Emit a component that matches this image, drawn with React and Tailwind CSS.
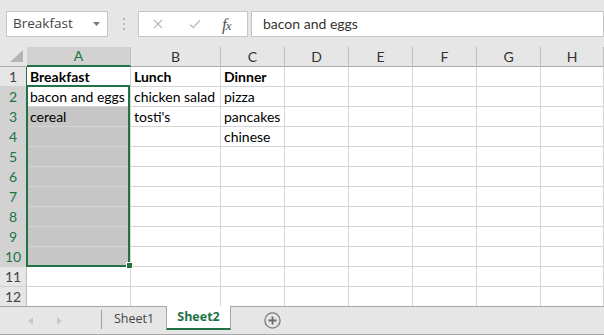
import React from "react";

const COLS = [
  ["A", "w-[104px]"],
  ["B", "w-[90px]"],
  ["C", "w-[64px]"],
  ["D", "w-[64px]"],
  ["E", "w-[64px]"],
  ["F", "w-[64px]"],
  ["G", "w-[64px]"],
  ["H", "w-[63px]"],
];

const DATA = {
  1: ["Breakfast", "Lunch", "Dinner"],
  2: ["bacon and eggs", "chicken salad", "pizza"],
  3: ["cereal", "tosti's", "pancakes"],
  4: ["", "", "chinese"],
};

const ROWS = [1, 2, 3, 4, 5, 6, 7, 8, 9, 10, 11, 12];

function RowHeader({ r }) {
  const sel = r >= 2 && r <= 10;
  let cls = "w-[27px] shrink-0 flex items-center justify-center border-r ";
  if (sel) cls += "bg-[#d2d2d2] text-[#217346] border-r-[#217346]";
  else if (r === 1) cls += "bg-[#e6e6e6] text-[#444444] border-r-[#217346]";
  else cls += "bg-[#e6e6e6] text-[#444444] border-r-[#bdbdbd]";
  if (r < 12) cls += " border-b border-b-[#d0d0d0]";
  return <div className={cls}>{r}</div>;
}

function Row({ r }) {
  const vals = DATA[r] || [];
  const rowCls =
    r < 12 ? "flex h-[20px] shrink-0" : "flex h-[19px] shrink-0";
  return (
    <div className={rowCls}>
      <RowHeader r={r} />
      {COLS.map(([l, w], c) => {
        const gray = c === 0 && r >= 3 && r <= 10;
        let cls =
          w +
          " shrink-0 flex items-center pl-[3px] whitespace-nowrap overflow-visible border-r border-[#d4d4d4] text-black ";
        cls += gray ? "bg-[#c6c6c6]" : "bg-white";
        if (r < 12) cls += " border-b";
        if (r === 1) cls += " font-bold";
        return (
          <div key={l} className={cls}>
            {vals[c] || ""}
          </div>
        );
      })}
    </div>
  );
}

export default function App() {
  return (
    <div className="w-[604px] h-[335px] bg-[#e6e6e6] flex flex-col overflow-hidden font-['Lato','Liberation_Sans',sans-serif] text-[14px] leading-none select-none">
      {/* Formula bar */}
      <div className="h-[47px] shrink-0 flex items-start pt-[11px]">
        <div className="ml-[6px] w-[102px] h-[26px] bg-white border border-[#c6c6c6] flex items-center justify-between pl-[6px] pr-[7px]">
          <span className="font-['Open_Sans','Noto_Sans',sans-serif] text-[13.5px] text-[#444444]">
            Breakfast
          </span>
          <svg width="7" height="4" viewBox="0 0 7 4">
            <polygon points="0,0 7,0 3.5,4" fill="#777777" />
          </svg>
        </div>
        <div className="ml-[15px] mt-[7px] flex flex-col gap-[3px]">
          <div className="w-[2px] h-[2px] bg-[#b5b5b5]" />
          <div className="w-[2px] h-[2px] bg-[#b5b5b5]" />
          <div className="w-[2px] h-[2px] bg-[#b5b5b5]" />
        </div>
        <div className="ml-[13px] w-[110px] h-[26px] bg-white border border-[#c6c6c6] flex items-center">
          <svg className="ml-[14px]" width="10" height="10" viewBox="0 0 10 10">
            <path d="M1 1 L9 9 M9 1 L1 9" stroke="#bdbdbd" strokeWidth="1.3" fill="none" />
          </svg>
          <svg className="ml-[26px]" width="12" height="10" viewBox="0 0 12 10">
            <path d="M1 5.5 L4.2 8.6 L11 1.2" stroke="#bdbdbd" strokeWidth="1.4" fill="none" />
          </svg>
          <span className="ml-[21px] font-['Liberation_Serif',serif] italic text-[#555555] text-[17px]">
            f<span className="text-[13px] ml-[-1px]">x</span>
          </span>
        </div>
        <div className="ml-[3px] w-[353px] h-[26px] bg-white border border-[#c6c6c6] flex items-center pl-[11px] text-[#333333]">
          bacon and eggs
        </div>
      </div>

      {/* Grid */}
      <div className="relative shrink-0">
        <div className="flex h-[20px]">
          <div className="w-[27px] shrink-0 border-b border-[#ababab] relative">
            <svg width="27" height="19" viewBox="0 0 27 19" className="block">
              <polygon points="10,15 23,15 23,3" fill="#b4b4b4" />
            </svg>
          </div>
          {COLS.map(([l, w], c) => (
            <div
              key={l}
              className={
                c === 0
                  ? w +
                    " shrink-0 flex items-center justify-center bg-[#d2d2d2] text-[#217346] border-r border-r-[#bdbdbd] border-b-2 border-b-[#217346]"
                  : w +
                    " shrink-0 flex items-center justify-center text-[#333333] border-r border-r-[#bdbdbd] border-b border-b-[#ababab]"
              }
            >
              {l}
            </div>
          ))}
        </div>
        {ROWS.map((r) => (
          <Row key={r} r={r} />
        ))}
        <div className="absolute left-[26px] top-[38px] w-[104px] h-[182px] border-2 border-[#217346] pointer-events-none" />
        <div className="absolute left-[126px] top-[215px] w-[7px] h-[7px] bg-[#217346] border border-white pointer-events-none" />
      </div>

      {/* Sheet tabs */}
      <div className="flex h-[29px] shrink-0 border-b border-[#a6a6a6] font-['Open_Sans','Noto_Sans',sans-serif] text-[12.5px]">
        <div className="w-[101px] border-t border-[#a6a6a6] flex items-center">
          <svg className="ml-[28px]" width="5" height="8" viewBox="0 0 5 8">
            <polygon points="5,0 5,8 0,4" fill="#c8c8c8" />
          </svg>
          <svg className="ml-[24px]" width="5" height="8" viewBox="0 0 5 8">
            <polygon points="0,0 0,8 5,4" fill="#c8c8c8" />
          </svg>
        </div>
        <div className="w-[65px] border-t border-[#a6a6a6] flex">
          <div className="w-[1px] h-[19px] mt-[3px] bg-[#a0a0a0]" />
          <div className="flex-1 flex items-center justify-center text-[#444444] pb-[2px]">
            Sheet1
          </div>
        </div>
        <div className="w-[65px] h-[24px] bg-white border-l border-r border-[#a6a6a6] border-b-2 border-b-[#217346] flex items-center justify-center font-bold text-[#217346]">
          Sheet2
        </div>
        <div className="flex-1 border-t border-[#a6a6a6] flex items-center">
          <svg className="ml-[33px] mb-[1px]" width="17" height="17" viewBox="0 0 17 17">
            <circle cx="8.5" cy="8.5" r="7.6" stroke="#7a7a7a" strokeWidth="1.3" fill="none" />
            <path d="M8.5 4.5 V12.5 M4.5 8.5 H12.5" stroke="#6a6a6a" strokeWidth="1.8" />
          </svg>
        </div>
      </div>
    </div>
  );
}
